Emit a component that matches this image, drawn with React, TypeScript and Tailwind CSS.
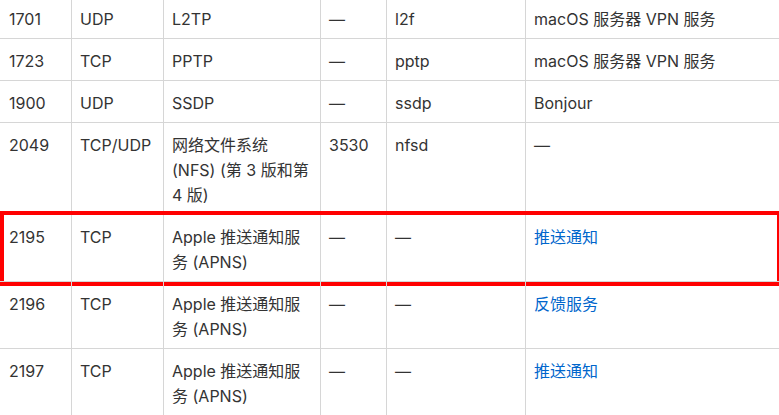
import React from 'react';

type Row = {
  port: string;
  proto: string;
  name: string;
  alt: string;
  svc: string;
  used: string;
  link?: boolean;
  marked?: boolean;
};

const ROWS: Row[] = [
  { port: '1701', proto: 'UDP', name: 'L2TP', alt: '—', svc: 'l2f', used: 'macOS 服务器 VPN 服务' },
  { port: '1723', proto: 'TCP', name: 'PPTP', alt: '—', svc: 'pptp', used: 'macOS 服务器 VPN 服务' },
  { port: '1900', proto: 'UDP', name: 'SSDP', alt: '—', svc: 'ssdp', used: 'Bonjour' },
  { port: '2049', proto: 'TCP/UDP', name: '网络文件系统 (NFS) (第 3 版和第 4 版)', alt: '3530', svc: 'nfsd', used: '—' },
  { port: '2195', proto: 'TCP', name: 'Apple 推送通知服务 (APNS)', alt: '—', svc: '—', used: '推送通知', link: true, marked: true },
  { port: '2196', proto: 'TCP', name: 'Apple 推送通知服务 (APNS)', alt: '—', svc: '—', used: '反馈服务', link: true },
  { port: '2197', proto: 'TCP', name: 'Apple 推送通知服务 (APNS)', alt: '—', svc: '—', used: '推送通知', link: true },
];

const CELL = "border-l border-[#d6d6d6] pl-[8px] pr-[8px] pt-[10px] pb-[6px]";

const App: React.FC = () => {
  return (
    <div
      className="w-[779px] h-[415px] overflow-hidden bg-white text-[#333] text-[16px] leading-[25px]"
      style={{ fontFamily: 'Inter, "Noto Sans CJK SC", sans-serif' }}
    >
      <div className="-mt-[4px]">
        {ROWS.map((r) => (
          <div
            key={r.port}
            className="relative grid grid-cols-[71px_92px_157px_66px_139px_1fr] border-t border-[#d6d6d6]"
          >
            <div className="pl-[9px] pr-[8px] pt-[10px] pb-[6px]">{r.port}</div>
            <div className={CELL}>{r.proto}</div>
            <div className={CELL}>{r.name}</div>
            <div className={CELL}>{r.alt}</div>
            <div className={CELL}>{r.svc}</div>
            <div className={CELL}>
              {r.link ? <a className="text-[#0066cc]">{r.used}</a> : r.used}
            </div>
            {r.marked && (
              <div className="pointer-events-none absolute -top-[4px] -bottom-[5px] left-0 -right-[2px] border-4 border-[#ff0000]" />
            )}
          </div>
        ))}
      </div>
    </div>
  );
};

export default App;
